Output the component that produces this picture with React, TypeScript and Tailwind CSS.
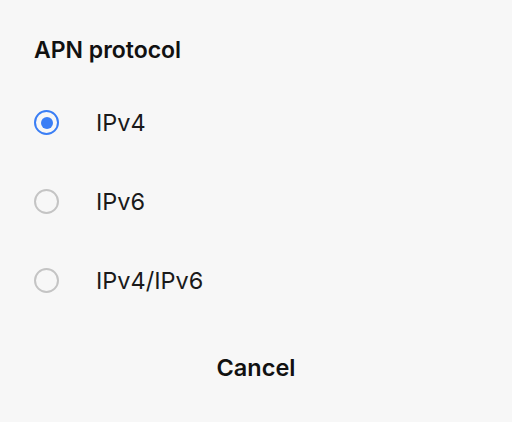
import React, { useState } from 'react';

const options = ['IPv4', 'IPv6', 'IPv4/IPv6'];

export default function App() {
  const [selected, setSelected] = useState('IPv4');

  return (
    <div
      className="w-[512px] h-[422px] bg-[#f7f7f7] text-[#111] flex flex-col"
      style={{ fontFamily: 'Inter, "Noto Sans", sans-serif' }}
    >
      <h2 className="pl-[34px] pt-[35px] text-[23px] font-semibold leading-[30px]">APN protocol</h2>

      {/* Options */}
      <div className="flex flex-col mt-[18px]">
        {options.map((opt) => {
          const active = opt === selected;
          return (
            <button
              key={opt}
              onClick={() => setSelected(opt)}
              className="flex items-center h-[79px] pl-[34px] text-left"
            >
              <span
                className={
                  active
                    ? 'w-[25px] h-[25px] rounded-full border-[2.5px] border-[#3a7ef5] flex items-center justify-center'
                    : 'w-[25px] h-[25px] rounded-full border-2 border-[#c4c4c4]'
                }
              >
                {active && <span className="w-[12px] h-[12px] rounded-full bg-[#3a7ef5]" />}
              </span>
              <span className="ml-[37px] text-[23.5px] leading-[30px] text-[#1a1a1a]">{opt}</span>
            </button>
          );
        })}
      </div>

      <div className="flex justify-center mt-[33px]">
        <button className="text-[23.5px] leading-[30px] font-semibold">Cancel</button>
      </div>
    </div>
  );
}
